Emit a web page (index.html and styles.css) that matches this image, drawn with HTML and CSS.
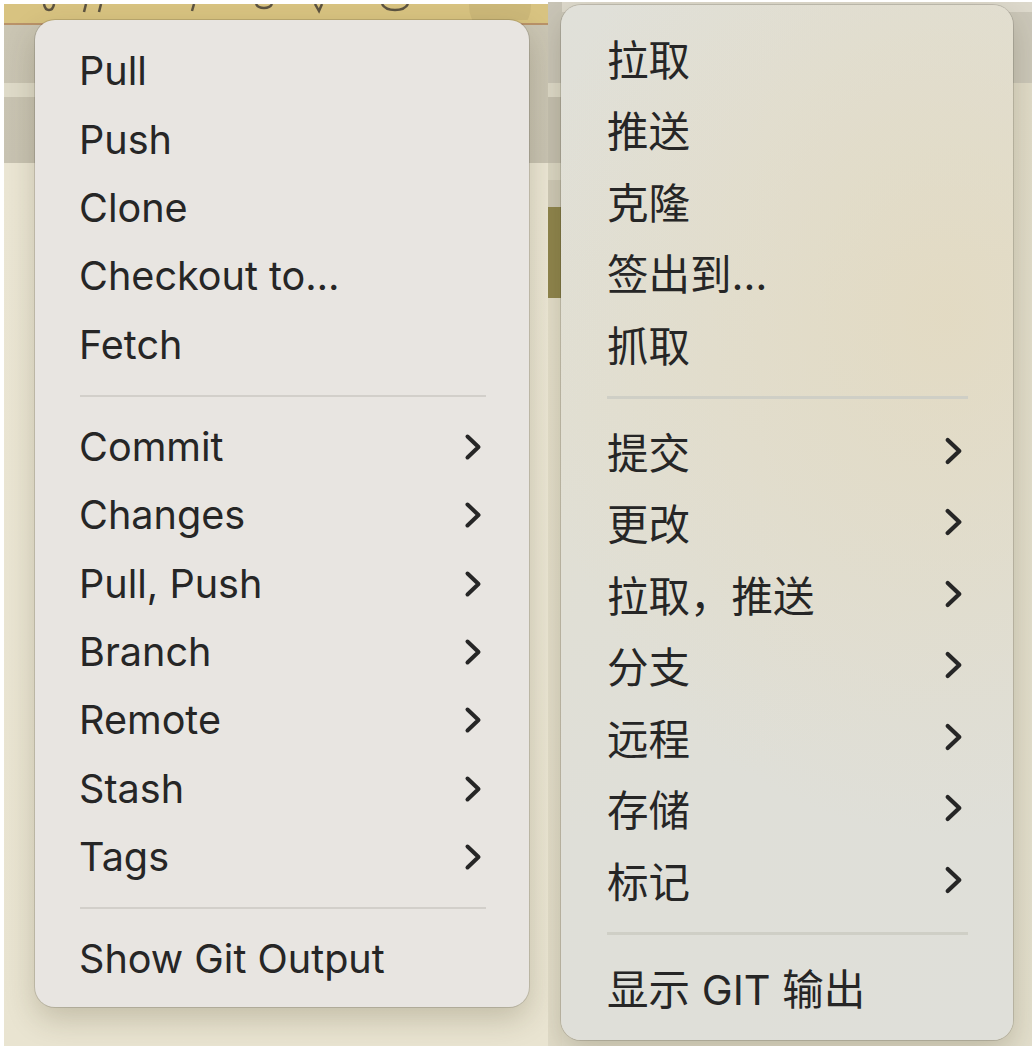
FILE: index.html
```html
<!DOCTYPE html>
<html lang="en">
<head>
<meta charset="utf-8">
<title>Git menu</title>
<link rel="stylesheet" href="styles.css">
</head>
<body>
<div class="shots">
  <section class="shot shot-en">
    <svg class="strip-art" width="544" height="16" viewBox="0 0 544 16" aria-hidden="true">
      <circle cx="496" cy="2" r="31" fill="#c9b577" opacity="0.8"/>
      <path d="M40 0 q1 6 5 6 q4 0 5 -6" fill="none" stroke="#5c5340" stroke-width="2.5"/>
      <path d="M82 0 l-2 8 M97 0 l-2 8" stroke="#5c5340" stroke-width="2.5" fill="none"/>
      <path d="M190 0 l-2 7" stroke="#5c5340" stroke-width="2.5" fill="none"/>
      <path d="M252 0 q2 4 8 4 q6 0 8 -4" fill="none" stroke="#5c5340" stroke-width="2.5"/>
      <path d="M311 0 l4 7 l3 -7" fill="none" stroke="#5c5340" stroke-width="2.5"/>
      <path d="M378 0 q3 6 13 6 q10 0 13 -6" fill="none" stroke="#5c5340" stroke-width="2.5"/>
    </svg>
    <div class="menu menu-en">
      <div class="item">Pull</div>
      <div class="item">Push</div>
      <div class="item">Clone</div>
      <div class="item">Checkout to…</div>
      <div class="item">Fetch</div>
      <div class="sep"></div>
      <div class="item">Commit<svg class="chev" viewBox="0 0 18 28"><path d="M3.5 3.5 L14.5 14 L3.5 24.5"/></svg></div>
      <div class="item">Changes<svg class="chev" viewBox="0 0 18 28"><path d="M3.5 3.5 L14.5 14 L3.5 24.5"/></svg></div>
      <div class="item">Pull, Push<svg class="chev" viewBox="0 0 18 28"><path d="M3.5 3.5 L14.5 14 L3.5 24.5"/></svg></div>
      <div class="item">Branch<svg class="chev" viewBox="0 0 18 28"><path d="M3.5 3.5 L14.5 14 L3.5 24.5"/></svg></div>
      <div class="item">Remote<svg class="chev" viewBox="0 0 18 28"><path d="M3.5 3.5 L14.5 14 L3.5 24.5"/></svg></div>
      <div class="item">Stash<svg class="chev" viewBox="0 0 18 28"><path d="M3.5 3.5 L14.5 14 L3.5 24.5"/></svg></div>
      <div class="item">Tags<svg class="chev" viewBox="0 0 18 28"><path d="M3.5 3.5 L14.5 14 L3.5 24.5"/></svg></div>
      <div class="sep"></div>
      <div class="item">Show Git Output</div>
    </div>
  </section>
  <section class="shot shot-zh" lang="zh-CN">
    <div class="menu menu-zh">
      <div class="item">拉取</div>
      <div class="item">推送</div>
      <div class="item">克隆</div>
      <div class="item">签出到…</div>
      <div class="item">抓取</div>
      <div class="sep"></div>
      <div class="item">提交<svg class="chev" viewBox="0 0 18 28"><path d="M3.5 3.5 L14.5 14 L3.5 24.5"/></svg></div>
      <div class="item">更改<svg class="chev" viewBox="0 0 18 28"><path d="M3.5 3.5 L14.5 14 L3.5 24.5"/></svg></div>
      <div class="item">拉取，推送<svg class="chev" viewBox="0 0 18 28"><path d="M3.5 3.5 L14.5 14 L3.5 24.5"/></svg></div>
      <div class="item">分支<svg class="chev" viewBox="0 0 18 28"><path d="M3.5 3.5 L14.5 14 L3.5 24.5"/></svg></div>
      <div class="item">远程<svg class="chev" viewBox="0 0 18 28"><path d="M3.5 3.5 L14.5 14 L3.5 24.5"/></svg></div>
      <div class="item">存储<svg class="chev" viewBox="0 0 18 28"><path d="M3.5 3.5 L14.5 14 L3.5 24.5"/></svg></div>
      <div class="item">标记<svg class="chev" viewBox="0 0 18 28"><path d="M3.5 3.5 L14.5 14 L3.5 24.5"/></svg></div>
      <div class="sep"></div>
      <div class="item">显示 GIT 输出</div>
    </div>
  </section>
</div>
</body>
</html>
```
FILE: styles.css
```css
html, body {
  margin: 0;
  padding: 0;
  background: #ffffff;
}

body {
  width: 1032px;
  height: 1046px;
  overflow: hidden;
  font-family: "Inter", "Liberation Sans", "Noto Sans CJK SC", sans-serif;
  color: #262626;
}

.shots {
  display: flex;
  align-items: flex-start;
  padding-left: 4px;
}

.shot {
  box-sizing: border-box;
  overflow: hidden;
}

.shot-en {
  width: 544px;
  height: 1042px;
  margin-top: 4px;
  padding-left: 31px;
  background:
    linear-gradient(to bottom,
      transparent 0, transparent 79px,
      #dfdbc9 79px, #dfdbc9 93px,
      transparent 93px) left top / 31px 100% no-repeat,
    linear-gradient(to bottom,
      #d8c381 0, #d8c381 19px,
      #b99269 19px, #b99269 21px,
      #cac5b3 21px, #c8c3b2 159px,
      #ebe6d4 159px, #e9e4d1 100%);
}

.strip-art {
  display: block;
  width: 544px;
  height: 16px;
  margin-left: -31px;
}

.shot-zh {
  width: 484px;
  height: 1044px;
  margin-top: 2px;
  padding-left: 13px;
  padding-top: 3px;
  background:
    linear-gradient(to bottom,
      #c9c5b7 0, #c9c5b7 81px,
      #dedac9 81px, #dedac9 95px,
      #c5c0b0 95px, #c5c0b0 161px,
      #dcd8c5 161px, #dcd8c5 178px,
      #cfcab7 178px, #cfcab7 205px,
      #8f854d 205px, #8f854d 296px,
      #e4dfcb 296px, #e2ddca 100%) left top / 14px 100% no-repeat,
    linear-gradient(to bottom,
      #ddd9cc 0, #ddd9cc 10px,
      #cbc7b9 10px, #cbc7b9 81px,
      #e0dbc8 81px, #e3dfcd 100%);
}

.menu {
  position: relative;
  box-sizing: border-box;
  border-radius: 20px;
  box-shadow:
    0 0 0 1px rgba(0, 0, 0, 0.13),
    0 12px 30px rgba(60, 50, 20, 0.22);
}

.menu-en {
  width: 494px;
  height: 987px;
  padding-top: 17px;
  background: #e8e5e1;
  font-size: 39.6px;
}

.menu-zh {
  width: 452px;
  height: 1035px;
  padding-top: 17px;
  background:
    radial-gradient(ellipse 420px 520px at 85% 30%, rgba(227, 217, 190, 0.75), rgba(227, 217, 190, 0) 100%),
    linear-gradient(160deg, #e0e0d9 0%, #e1dfd3 35%, #dfdfd8 70%, #dfdfd9 100%);
  font-size: 41.5px;
}

.item {
  display: flex;
  align-items: center;
  justify-content: space-between;
  white-space: nowrap;
}

.menu-en .item {
  height: 68.4px;
  padding: 0 47px 0 44px;
}

.menu-zh .item {
  height: 71.5px;
  padding: 0 50px 0 46px;
}

.chev {
  width: 18px;
  height: 28px;
  flex: none;
}

.menu-zh .chev {
  width: 19px;
  height: 30px;
}

.chev path {
  fill: none;
  stroke: #262626;
  stroke-width: 4;
  stroke-linecap: round;
  stroke-linejoin: round;
}

.sep {
  position: relative;
}

.menu-en .sep {
  height: 33.6px;
  margin: 0 43px 0 45px;
}

.menu-zh .sep {
  height: 35.5px;
  margin: 0 45px 0 46px;
}

.sep::after {
  content: "";
  position: absolute;
  left: 0;
  right: 0;
  top: 50%;
  height: 2px;
  margin-top: -1px;
  background: #d2cfca;
}

.menu-zh .sep::after {
  height: 3px;
  background: #cfcfc6;
}
```
